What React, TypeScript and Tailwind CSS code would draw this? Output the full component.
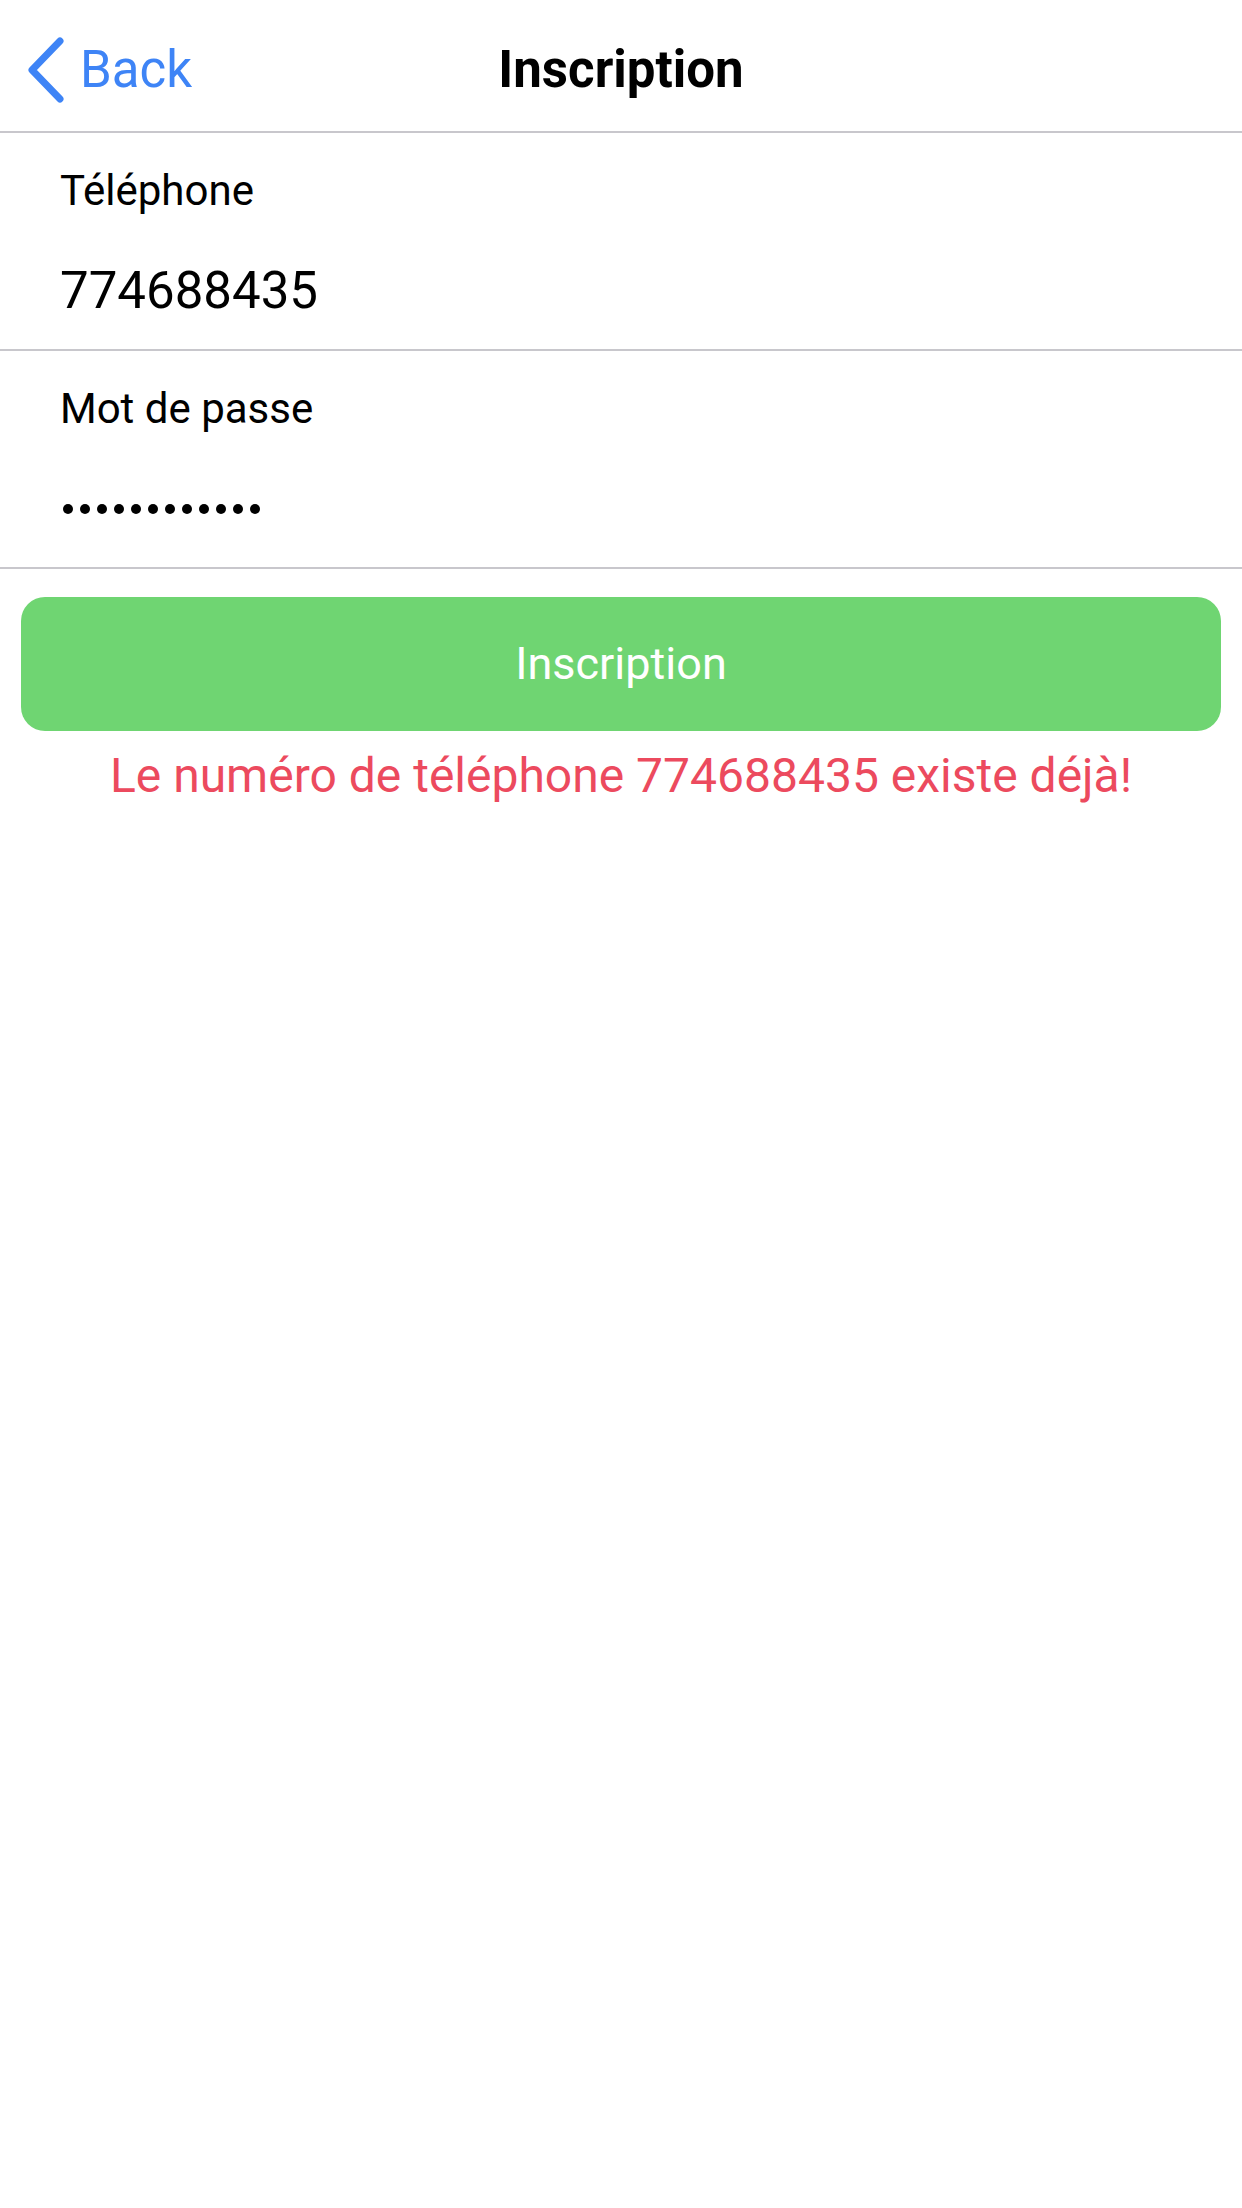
import React from "react";

function Field({ label, value, secret }: { label: string; value: string; secret?: boolean }) {
  return (
    <div className="h-[218px] border-b-2 border-[#c8c7cc] px-[60px] pt-[33px]">
      <div className="text-[42px] leading-[50px] text-black">{label}</div>
      {secret ? (
        <div className="mt-[45px] flex h-[60px] items-center gap-[7px] pl-[3px]">
          {Array.from({ length: 12 }).map((_, i) => (
            <span key={i} className="block h-[10px] w-[10px] rounded-full bg-black" />
          ))}
        </div>
      ) : (
        <div className="mt-[45px] text-[51px] leading-[60px] text-black">{value}</div>
      )}
    </div>
  );
}

export default function App() {
  return (
    <div className="min-h-[2208px] w-[1242px] bg-white" style={{ fontFamily: "Roboto, 'Noto Sans', sans-serif" }}>
      {/* Header */}
      <div className="grid h-[133px] grid-cols-[1fr_auto_1fr] items-center border-b-2 border-[#c8c7cc] pt-[8px]">
        <div className="flex items-center pl-[26px]">
          <svg width="42" height="66" viewBox="0 0 42 66" className="mr-[12px]">
            <polyline
              points="34,4 6,33 34,62"
              fill="none"
              stroke="#3E84F6"
              strokeWidth="7"
              strokeLinecap="round"
              strokeLinejoin="round"
            />
          </svg>
          <span className="text-[51px] leading-[60px] text-[#3E84F6]">Back</span>
        </div>
        <div className="text-[51px] font-bold leading-[60px] text-black">Inscription</div>
        <div />
      </div>

      <Field label="Téléphone" value="774688435" />
      <Field label="Mot de passe" value="" secret />

      <div className="mx-[21px] mt-[28px] flex h-[134px] items-center justify-center rounded-[24px] bg-[#6FD572]">
        <span className="text-[45px] leading-[60px] text-white">Inscription</span>
      </div>

      <div className="mt-[15px] text-center text-[48px] leading-[60px] text-[#EC4A5E]">
        Le numéro de téléphone 774688435 existe déjà!
      </div>
    </div>
  );
}
